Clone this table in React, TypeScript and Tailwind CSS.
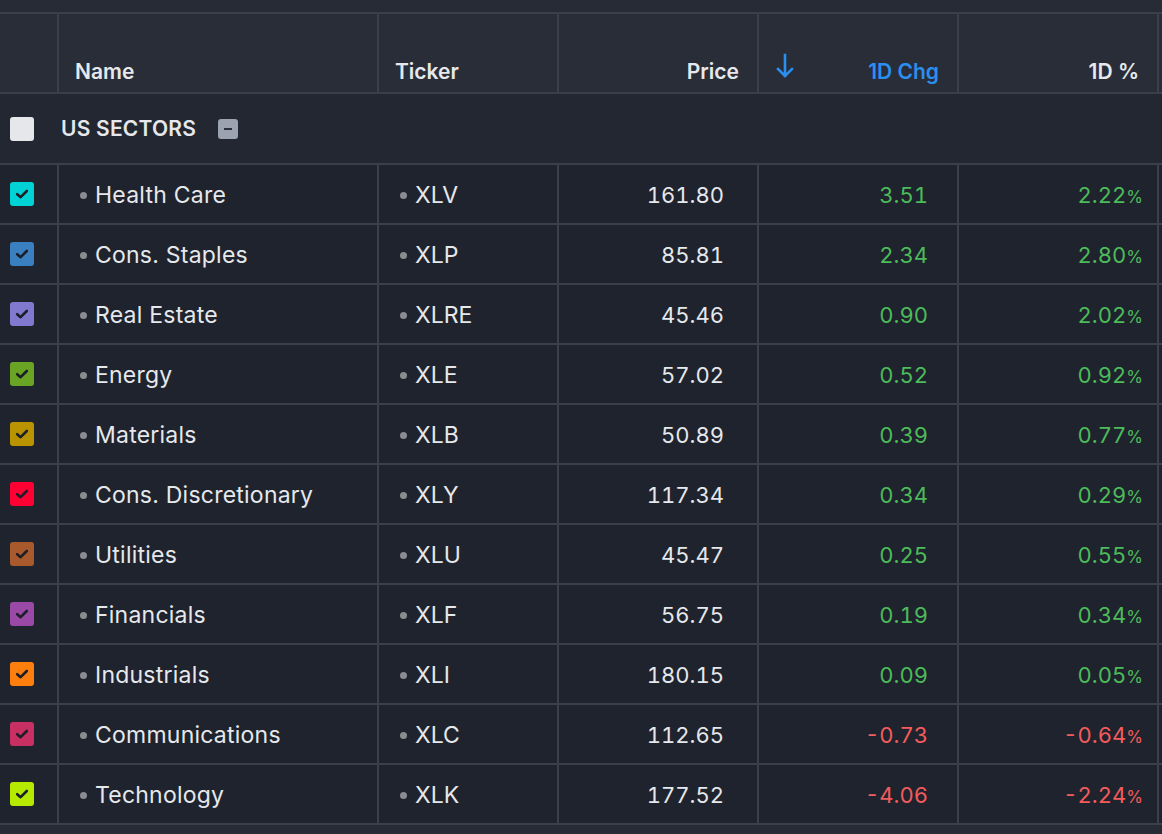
import React from 'react'

type Row = { name: string; ticker: string; price: string; chg: string; pct: string; color: string }

const rows: Row[] = [
  { name: 'Health Care', ticker: 'XLV', price: '161.80', chg: '3.51', pct: '2.22', color: 'bg-[#00d2d6]' },
  { name: 'Cons. Staples', ticker: 'XLP', price: '85.81', chg: '2.34', pct: '2.80', color: 'bg-[#3a80c0]' },
  { name: 'Real Estate', ticker: 'XLRE', price: '45.46', chg: '0.90', pct: '2.02', color: 'bg-[#8178d0]' },
  { name: 'Energy', ticker: 'XLE', price: '57.02', chg: '0.52', pct: '0.92', color: 'bg-[#6aa425]' },
  { name: 'Materials', ticker: 'XLB', price: '50.89', chg: '0.39', pct: '0.77', color: 'bg-[#b99400]' },
  { name: 'Cons. Discretionary', ticker: 'XLY', price: '117.34', chg: '0.34', pct: '0.29', color: 'bg-[#ff0033]' },
  { name: 'Utilities', ticker: 'XLU', price: '45.47', chg: '0.25', pct: '0.55', color: 'bg-[#a85a2c]' },
  { name: 'Financials', ticker: 'XLF', price: '56.75', chg: '0.19', pct: '0.34', color: 'bg-[#9a4aa6]' },
  { name: 'Industrials', ticker: 'XLI', price: '180.15', chg: '0.09', pct: '0.05', color: 'bg-[#ff7f0e]' },
  { name: 'Communications', ticker: 'XLC', price: '112.65', chg: '-0.73', pct: '-0.64', color: 'bg-[#c83064]' },
  { name: 'Technology', ticker: 'XLK', price: '177.52', chg: '-4.06', pct: '-2.24', color: 'bg-[#b5ea00]' },
]

function Check() {
  return (
    <svg width="16" height="16" viewBox="0 0 16 16" fill="none">
      <path d="M3.2 8.2 L6.6 11.2 L12.8 5" stroke="#1c1f27" strokeWidth="2.6" strokeLinecap="round" strokeLinejoin="round" />
    </svg>
  )
}

function Bullet() {
  return <span className="inline-block w-[7px] h-[7px] rounded-full bg-[#8a8c90] mr-[8px]" />
}

export default function App() {
  return (
    <div className="w-[1162px] h-[834px] overflow-hidden bg-[#262b35] text-[#e6e8ec]" style={{ fontFamily: 'Inter, "Noto Sans", sans-serif' }}>
      <div className="h-[12px]" />

      {/* Header */}
      <div className="flex h-[82px] bg-[#282d38] border-y-2 border-[#3a3f4b] text-[21px] font-semibold">
        <div className="w-[57px] shrink-0" />
        <div className="w-[320px] shrink-0 border-l-2 border-[#3a3f4b] flex items-end pb-[5px] pl-[16px]">Name</div>
        <div className="w-[180px] shrink-0 border-l-2 border-[#3a3f4b] flex items-end pb-[5px] pl-[16px]">Ticker</div>
        <div className="w-[200px] shrink-0 border-l-2 border-[#3a3f4b] flex items-end justify-end pb-[5px] pr-[18px]">Price</div>
        <div className="w-[200px] shrink-0 border-l-2 border-[#3a3f4b] flex items-end justify-between pb-[5px] pl-[16px] pr-[18px] text-[#2b8ff0]">
          <svg width="20" height="26" viewBox="0 0 20 26" fill="none" className="mb-[8px]">
            <path d="M10 2 V23 M3 16 L10 23 L17 16" stroke="#2b8ff0" strokeWidth="2.6" strokeLinecap="square" />
          </svg>
          <span>1D Chg</span>
        </div>
        <div className="w-[200px] shrink-0 border-l-2 border-[#3a3f4b] flex items-end justify-end pb-[5px] pr-[18px]">1D %</div>
        <div className="flex-1 border-l-2 border-[#3a3f4b]" />
      </div>

      {/* Group row */}
      <div className="flex items-center h-[71px] bg-[#222731] border-b-2 border-[#3a3f4b]">
        <div className="w-[24px] h-[24px] ml-[10px] rounded-[3px] bg-[#e5e7eb]" />
        <span className="ml-[27px] text-[21px] font-semibold tracking-[0.01em]">US SECTORS</span>
        <span className="ml-[22px] w-[20px] h-[20px] rounded-[3px] bg-[#9ba2b0] flex items-center justify-center">
          <span className="block w-[8px] h-[2px] bg-[#2a2f3a]" />
        </span>
      </div>

      {/* Data rows */}
      {rows.map((r) => {
        const neg = r.chg.startsWith('-')
        const clr = neg ? 'text-[#f25c5c]' : 'text-[#4cbb5a]'
        return (
          <div key={r.ticker} className="flex h-[60px] bg-[#1f232d] border-b-2 border-[#3a3f4b] text-[23px]">
            <div className="w-[57px] shrink-0 flex items-center">
              <span className={`w-[24px] h-[24px] ml-[10px] rounded-[3px] flex items-center justify-center ${r.color}`}>
                <Check />
              </span>
            </div>
            <div className="w-[320px] shrink-0 border-l-2 border-[#3a3f4b] flex items-center pl-[21px] pt-[3px] tracking-[0.01em]">
              <Bullet />
              {r.name}
            </div>
            <div className="w-[180px] shrink-0 border-l-2 border-[#3a3f4b] flex items-center pl-[21px] pt-[3px]">
              <Bullet />
              {r.ticker}
            </div>
            <div className="w-[200px] shrink-0 border-l-2 border-[#3a3f4b] flex items-center justify-end pr-[33px] pt-[3px] tabular-nums text-[22px]">{r.price}</div>
            <div className={`w-[200px] shrink-0 border-l-2 border-[#3a3f4b] flex items-center justify-end pr-[29px] pt-[3px] tabular-nums text-[22px] ${clr}`}>{r.chg}</div>
            <div className={`w-[200px] shrink-0 border-l-2 border-[#3a3f4b] flex items-center justify-end pr-[14px] pt-[3px] tabular-nums text-[22px] ${clr}`}>
              {r.pct}
              <span className="text-[17px] mt-[4px]">%</span>
            </div>
            <div className="flex-1 border-l-2 border-[#3a3f4b]" />
          </div>
        )
      })}
    </div>
  )
}
